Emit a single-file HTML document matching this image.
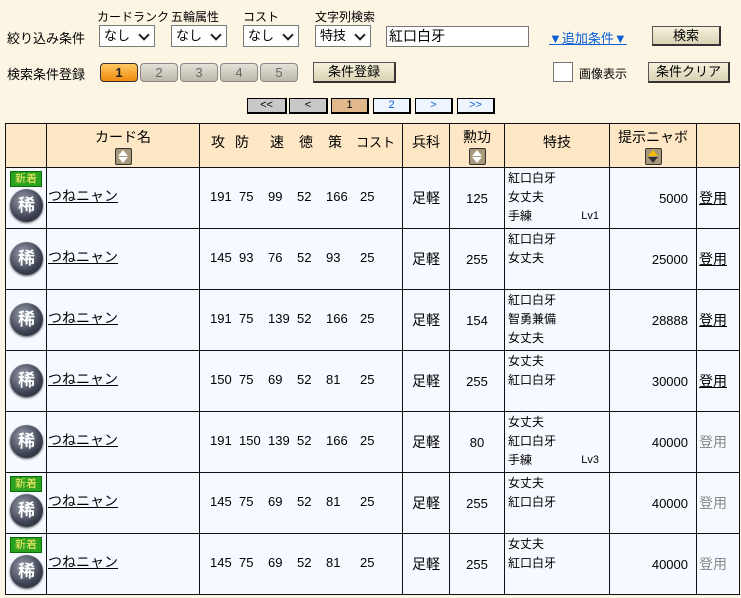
<!DOCTYPE html>
<html><head><meta charset="utf-8"><style>
*{margin:0;padding:0;box-sizing:border-box}
body{width:741px;height:598px;overflow:hidden;background:#fcf5e4;font-family:"Liberation Sans","Noto Sans CJK JP",sans-serif;font-size:13px;color:#000;position:relative}
.a{position:absolute;white-space:nowrap}
.sel{position:absolute;height:22px;border:1px solid #7a7a7a;background:#fff;font-size:13px;padding:2px 4px;line-height:16px}
.sel:after{content:"";position:absolute;right:6px;top:5px;width:6px;height:6px;border-right:2px solid #222;border-bottom:2px solid #222;transform:rotate(45deg)}
.btn{position:absolute;background:linear-gradient(#f6f1dc,#d9d2b4);border:1px solid #555;border-right:2px solid #333;border-bottom:2px solid #333;text-align:center;font-size:13px}
.num{position:absolute;top:63px;width:38px;height:19px;border:1px solid #888;border-radius:4px;background:linear-gradient(#e4e2d8,#bcb9ab);color:#666;text-align:center;font-size:13px;line-height:17px}
.pg{position:absolute;top:98px;height:16px;border:1px solid #000;border-right:2px solid #000;border-bottom:2px solid #000;text-align:center;font-size:11px;line-height:13px}
table{position:absolute;left:5px;top:123px;border-collapse:collapse;table-layout:fixed}
td{border:1.5px solid #111;height:61px;background:#f6f9ff;vertical-align:middle;position:relative;font-size:13px;overflow:hidden}
tr.h td{background:#fde7c5;height:44px;text-align:center;vertical-align:top;padding-top:3px;font-size:14px}
.sort{display:inline-block;width:17px;height:17px;background:#a8987a;border:1px solid #333;border-radius:2px;position:relative;vertical-align:top;margin-top:1px}
.sort:before{content:"";position:absolute;left:2px;top:1px;border-left:5.5px solid transparent;border-right:5.5px solid transparent;border-bottom:6px solid #fff}
.sort:after{content:"";position:absolute;left:2px;top:8px;border-left:5.5px solid transparent;border-right:5.5px solid transparent;border-top:6px solid #fff}
.sort.y:before{border-bottom-color:#f5b800}
.sort.y:after{border-top-color:#333}
.new{position:absolute;left:4px;top:3px;width:32px;height:16px;background:#2aa11f;border:1px solid #0a6a0a;color:#ffeb6a;font-size:11px;line-height:14px;text-align:center}
.ki{position:absolute;left:4px;width:33px;height:33px;border-radius:50%;background:radial-gradient(circle at 40% 35%,#9aa0b0,#3c4252 60%,#1c202a);color:#fff;font-size:17px;font-weight:bold;text-align:center;line-height:33px;box-shadow:0 1px 2px #555}
.nm{position:absolute;left:1px;top:18px;text-decoration:underline;font-size:14px}
.s{position:absolute;top:21px;font-size:13px}
.c{text-align:center;font-size:14px}
.sk{font-size:12px;line-height:19px;padding-left:3px;vertical-align:top;padding-top:1px}
.r{text-align:right;padding-right:8px;font-size:13px}
.ty{font-size:14px;text-decoration:underline;padding-left:2px}
.ty.g{color:#888;text-decoration:none}
</style></head><body>
<div class="a" style="left:97px;top:8px;font-size:12px">カードランク</div>
<div class="a" style="left:171px;top:8px;font-size:12px">五輪属性</div>
<div class="a" style="left:243px;top:8px;font-size:12px">コスト</div>
<div class="a" style="left:315px;top:8px;font-size:12px">文字列検索</div>
<div class="a" style="left:7px;top:28px;font-size:13px">絞り込み条件</div>
<div class="sel" style="left:99px;top:25px;width:56px">なし</div>
<div class="sel" style="left:171px;top:25px;width:56px">なし</div>
<div class="sel" style="left:243px;top:25px;width:56px">なし</div>
<div class="sel" style="left:315px;top:25px;width:56px">特技</div>
<div class="a" style="left:386px;top:26px;width:143px;height:21px;border:1px solid #777;background:#fff;font-size:14px;padding-left:2px;line-height:19px">紅口白牙</div>
<div class="a" style="left:549px;top:28px;color:#0a5fd6;text-decoration:underline;font-size:13px">▼追加条件▼</div>
<div class="btn" style="left:652px;top:26px;width:69px;height:20px;line-height:17px">検索</div>
<div class="a" style="left:7px;top:64px;font-size:13px">検索条件登録</div>
<div class="num" style="left:100px;background:linear-gradient(#ffc861,#f08a10);color:#222;border-color:#333;font-weight:bold">1</div>
<div class="num" style="left:140px">2</div>
<div class="num" style="left:180px">3</div>
<div class="num" style="left:220px">4</div>
<div class="num" style="left:260px">5</div>
<div class="btn" style="left:313px;top:62px;width:83px;height:21px;line-height:18px">条件登録</div>
<div class="a" style="left:553px;top:62px;width:20px;height:20px;border:1px solid #777;background:#fff"></div>
<div class="a" style="left:579px;top:65px;font-size:12px">画像表示</div>
<div class="btn" style="left:648px;top:62px;width:82px;height:21px;line-height:18px">条件クリア</div>
<div class="pg" style="left:247px;width:40px;background:#c8c8c8">&lt;&lt;</div>
<div class="pg" style="left:289px;width:39px;background:#c8c8c8">&lt;</div>
<div class="pg" style="left:331px;width:38px;background:#e0b88a">1</div>
<div class="pg" style="left:373px;width:38px;background:#eef5ff;color:#1060d0">2</div>
<div class="pg" style="left:415px;width:38px;background:#eef5ff;color:#1060d0">&gt;</div>
<div class="pg" style="left:457px;width:38px;background:#eef5ff;color:#1060d0">&gt;&gt;</div>
<table>
<colgroup><col style="width:41px"><col style="width:153px"><col style="width:203px"><col style="width:47px"><col style="width:55px"><col style="width:105px"><col style="width:87px"><col style="width:43px"></colgroup>
<tr class="h"><td></td><td>カード名<br><span class="sort"></span></td>
<td style="text-align:left"><span class="a" style="left:11px;top:8px">攻</span><span class="a" style="left:35px;top:8px">防</span><span class="a" style="left:70px;top:8px">速</span><span class="a" style="left:99px;top:8px">徳</span><span class="a" style="left:128px;top:8px">策</span><span class="a" style="left:156px;top:8px;font-size:13px">コスト</span></td>
<td style="padding-top:8px">兵科</td><td>勲功<br><span class="sort"></span></td><td style="padding-top:8px">特技</td><td>提示ニャボ<br><span class="sort y"></span></td><td></td></tr>
</table>
<script>
var R=[[1,[191,75,99,52,166,25],125,["紅口白牙","女丈夫","手練|Lv1"],5000,0],
[0,[145,93,76,52,93,25],255,["紅口白牙","女丈夫"],25000,0],
[0,[191,75,139,52,166,25],154,["紅口白牙","智勇兼備","女丈夫"],28888,0],
[0,[150,75,69,52,81,25],255,["女丈夫","紅口白牙"],30000,0],
[0,[191,150,139,52,166,25],80,["女丈夫","紅口白牙","手練|Lv3"],40000,1],
[1,[145,75,69,52,81,25],255,["女丈夫","紅口白牙"],40000,1],
[1,[145,75,69,52,81,25],255,["女丈夫","紅口白牙"],40000,1]];
var X=[10,39,68,97,126,160],h='';
R.forEach(function(r){
 h+='<tr><td>'+(r[0]?'<div class="new">新着</div><div class="ki" style="top:21px">稀</div>':'<div class="ki" style="top:13px">稀</div>')+'</td>';
 h+='<td><span class="nm">つねニャン</span></td><td>';
 r[1].forEach(function(v,i){h+='<span class="s" style="left:'+X[i]+'px">'+v+'</span>'});
 h+='</td><td class="c">足軽</td><td class="c" style="font-size:13px">'+r[2]+'</td><td class="sk">';
 r[3].forEach(function(s){var p=s.split('|');h+='<div style="position:relative">'+p[0]+(p[1]?'<span style="position:absolute;right:10px;font-size:11px">'+p[1]+'</span>':'')+'</div>'});
 h+='</td><td class="r">'+r[4]+'</td><td class="ty'+(r[5]?' g':'')+'">登用</td></tr>';
});
document.querySelector('table').insertAdjacentHTML('beforeend',h);
</script>
</body></html>
